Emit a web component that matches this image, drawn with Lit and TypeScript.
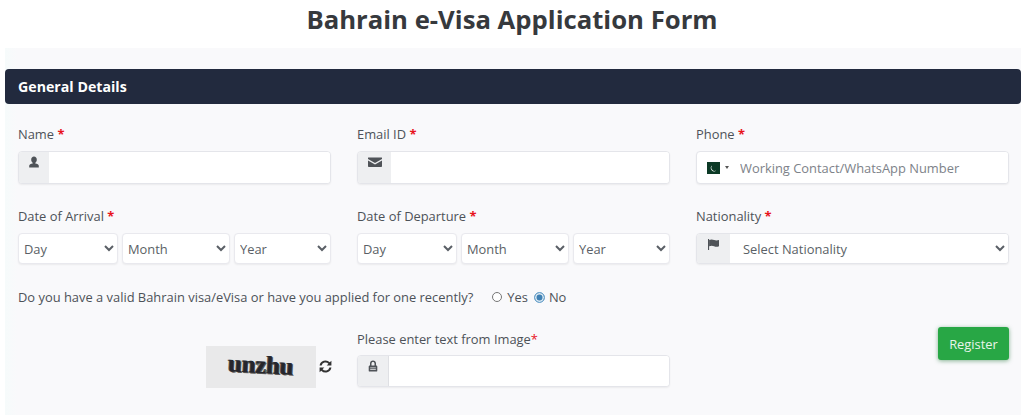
import { LitElement, html, css, svg } from "lit";
import { customElement } from "lit/decorators.js";

const userIcon = svg`<path d="M6 .6c1.700 0 2.800 1.300 2.800 3.100 0 1.300-.7 2.500-1.500 3v.7c1.900.4 3.500 1 3.500 2.300v1.700H1.200V9.700c0-1.300 1.600-1.900 3.500-2.300v-.7c-.8-.5-1.500-1.700-1.500-3C3.200 1.900 4.300.6 6 .6z"/>`;
const mailIcon = svg`<path d="M.5 2.500h13c.5 0 .5.4.5.800v.6L7 8 0 3.900v-.6c0-.4 0-.8.500-.8z"/><path d="M0 5.400 7 9.500l7-4.100v5.800c0 .5-.3.8-.8.8H.8c-.5 0-.8-.3-.8-.8z"/>`;
const lockIcon = svg`<path fill-rule="evenodd" d="M6 .6c1.800 0 3 1.300 3 3v1.900h.4c.5 0 .9.400.9.900v4.300c0 .5-.4.900-.9.900H2.600c-.5 0-.9-.4-.9-.9V6.400c0-.5.400-.9.900-.9H3V3.600c0-1.700 1.200-3 3-3zm0 1.400c-.9 0-1.500.6-1.500 1.500v2h3v-2C7.500 2.600 6.900 2 6 2zM3.200 7.400v.8h5.600v-.8zm0 1.800v.8h5.600v-.8z"/>`;
const flagIcon = svg`<path d="M1 1h1.100v11H1z"/><path d="M2.100 2c2-.9 3.500-.6 5 0s3 .7 4.900 0v6.200c-1.900.8-3.400.7-4.900 0s-3-.8-5 0z"/>`;

@customElement("app-root")
export class AppRoot extends LitElement {
  static styles = css`
    :host { display: block; height: 415px; overflow: hidden; background: #fff; font-family: "Open Sans", "Noto Sans", sans-serif; color: #4d5258; font-size: 12.900px; }
    * { box-sizing: border-box; }
    h1 { margin: 0; height: 48px; padding-top: 2px; text-align: center; font-size: 25.700px; line-height: 36px; font-weight: 700; color: #36393d; }
    .panel { margin: 0 3px 0 5px; height: 367px; padding-top: 21px; background: linear-gradient(90deg, #f6fbfb, #f9f9fb 12px); }
    .bar { height: 35px; background: #222a3e; border-radius: 4px; color: #fff; font-weight: 700; font-size: 14.200px; line-height: 35px; padding-left: 13px; }
    .body { padding: 20px 12px 0 13px; display: flex; flex-direction: column; }
    .grid { display: grid; grid-template-columns: repeat(3, 313px); column-gap: 26px; }
    .row2 { margin-top: 22px; }
    label { display: block; line-height: 20px; height: 20px; margin-bottom: 7px; }
    .req { color: #e8141c; font-weight: 700; }
    .group { display: flex; height: 33px; border-radius: 4px; background: #fff; border: 1px solid #e4e5ea; box-shadow: 0 1px 2px rgba(0,0,0,.06); overflow: hidden; }
    .addon { flex: none; width: 30px; background: #eeeff1; display: flex; justify-content: center; align-items: flex-start; padding-top: 3px; color: #4f5358; }
    .addon.wide { width: 33px; }
    .addon.lock { width: 31px; border-right: 1px solid #dfe0e4; }
    .addon svg { fill: currentColor; display: block; }
    .group input { flex: 1; min-width: 0; border: 0; outline: 0; background: #fff; font: inherit; color: inherit; padding: 0 10px; }
    .group input::placeholder { color: #7d8289; opacity: 1; }
    .flag-btn { flex: none; display: flex; align-items: center; gap: 5px; padding-left: 10px; width: 33px; }
    .caret { width: 0; height: 0; flex: none; border-left: 2.500px solid transparent; border-right: 2.500px solid transparent; border-top: 3px solid #555; }
    .flag { display: block; flex: none; }
    .dates { display: grid; grid-template-columns: 100px 108px 97px; column-gap: 4px; }
    select { height: 31px; width: 100%; border: 1px solid #e9e9ee; border-radius: 4px; background-color: #fff; font: inherit; color: #5a5f66; padding: 0 0 0 1px; box-shadow: 0 1px 2px rgba(0,0,0,.06); outline: 0; }
    .nat { height: 31px; }
    .nat .addon { width: 33px; padding-top: 4px; }
    .nat select { flex: 1; min-width: 0; height: 29px; border: 0; box-shadow: none; border-radius: 0; padding-left: 9px; }
    .visa { display: flex; align-items: center; height: 20px; margin-top: 23px; white-space: nowrap; }
    .radio { display: flex; align-items: center; margin-left: 19px; gap: 5px; }
    .radio + .radio { margin-left: 6px; gap: 4px; }
    .dot { width: 10px; height: 10px; border-radius: 50%; border: 1px solid #767676; background: #fff; }
    .dot.on { border: 1.500px solid #6ba3cc; background: #3f80b3; box-shadow: inset 0 0 0 1.500px #dbe9f3; width: 11px; height: 11px; }
    .row4 { margin-top: 22px; }
    .captcha { display: flex; justify-content: flex-end; align-items: center; padding-top: 14px; height: 61px; }
    .cap-img { width: 110px; height: 42px; background: #e9e9ea; display: flex; justify-content: center; padding-top: 4px; font-family: "Liberation Serif", serif; font-weight: 700; font-size: 25px; line-height: 30px; color: #26262c; letter-spacing: -.3px; }
    .cap-img span { display: inline-block; transform: rotate(3deg); text-shadow: 1px 1px 0 #555, -1px 0 0 #555; }
    .refresh { width: 13px; height: 13px; margin: 0 -1px 0 3px; display: block; fill: #333; }
    .capfield label { margin-bottom: 6px; }
    .capfield .group { height: 32px; }
    .reg-wrap { display: flex; justify-content: flex-end; margin-top: -2px; }
    button { width: 71px; height: 33px; border: 0; border-radius: 3px; background: #28a745; color: #e8f4ea; font: inherit; box-shadow: 0 1px 4px rgba(40,120,60,.55); padding: 0; }
  `;

  private req() { return html`<span class="req">*</span>`; }

  private dates() {
    const part = (t: string) => html`<select aria-label=${t}><option>${t}</option></select>`;
    return html`<div class="dates">${part("Day")}${part("Month")}${part("Year")}</div>`;
  }

  private icon(w: number, h: number, vb: string, p: unknown) {
    return html`<svg width=${w} height=${h} viewBox=${vb}>${p}</svg>`;
  }

  render() {
    return html`
      <h1>Bahrain e-Visa Application Form</h1>
      <section class="panel">
        <div class="bar">General Details</div>
        <div class="body">
          <div class="grid">
            <div>
              <label>Name ${this.req()}</label>
              <div class="group"><div class="addon">${this.icon(12, 14, "0 0 12 12", userIcon)}</div><input /></div>
            </div>
            <div>
              <label>Email ID ${this.req()}</label>
              <div class="group"><div class="addon wide">${this.icon(14, 14, "0 0 14 14", mailIcon)}</div><input /></div>
            </div>
            <div>
              <label>Phone ${this.req()}</label>
              <div class="group">
                <div class="flag-btn">
                  <svg class="flag" width="13" height="12" viewBox="0 0 13 12"><rect width="13" height="12" fill="#0c3a26"/><path d="M5 3.500a3.200 3.200 0 0 0 4.300 5A3.400 3.400 0 0 1 5 3.500z" fill="#fff"/></svg>
                  <span class="caret"></span>
                </div>
                <input placeholder="Working Contact/WhatsApp Number" />
              </div>
            </div>
          </div>
          <div class="grid row2">
            <div><label>Date of Arrival ${this.req()}</label>${this.dates()}</div>
            <div><label>Date of Departure ${this.req()}</label>${this.dates()}</div>
            <div>
              <label>Nationality ${this.req()}</label>
              <div class="group nat"><div class="addon">${this.icon(13, 13, "0 0 13 13", flagIcon)}</div><select aria-label="Nationality"><option>Select Nationality</option></select></div>
            </div>
          </div>
          <div class="visa">
            <span>Do you have a valid Bahrain visa/eVisa or have you applied for one recently?</span>
            <span class="radio"><span class="dot"></span>Yes</span>
            <span class="radio"><span class="dot on"></span>No</span>
          </div>
          <div class="grid row4">
            <div class="captcha">
              <div class="cap-img"><span>unzhu</span></div>
              <svg class="refresh" viewBox="1.500 1.500 11 11"><path d="M2 6.200a5 5 0 0 1 8.600-2.700L12 2.200v4H8l1.500-1.500A3.400 3.400 0 0 0 3.700 6.200zM12 7.800a5 5 0 0 1-8.600 2.700L2 11.800v-4h4L4.500 9.300a3.400 3.400 0 0 0 5.800-1.500z"/></svg>
            </div>
            <div class="capfield">
              <label>Please enter text from Image<span style="color:#e8141c">*</span></label>
              <div class="group"><div class="addon lock">${this.icon(12, 14, "0 0 12 12", lockIcon)}</div><input /></div>
            </div>
            <div class="reg-wrap"><button>Register</button></div>
          </div>
        </div>
      </section>
    `;
  }
}
